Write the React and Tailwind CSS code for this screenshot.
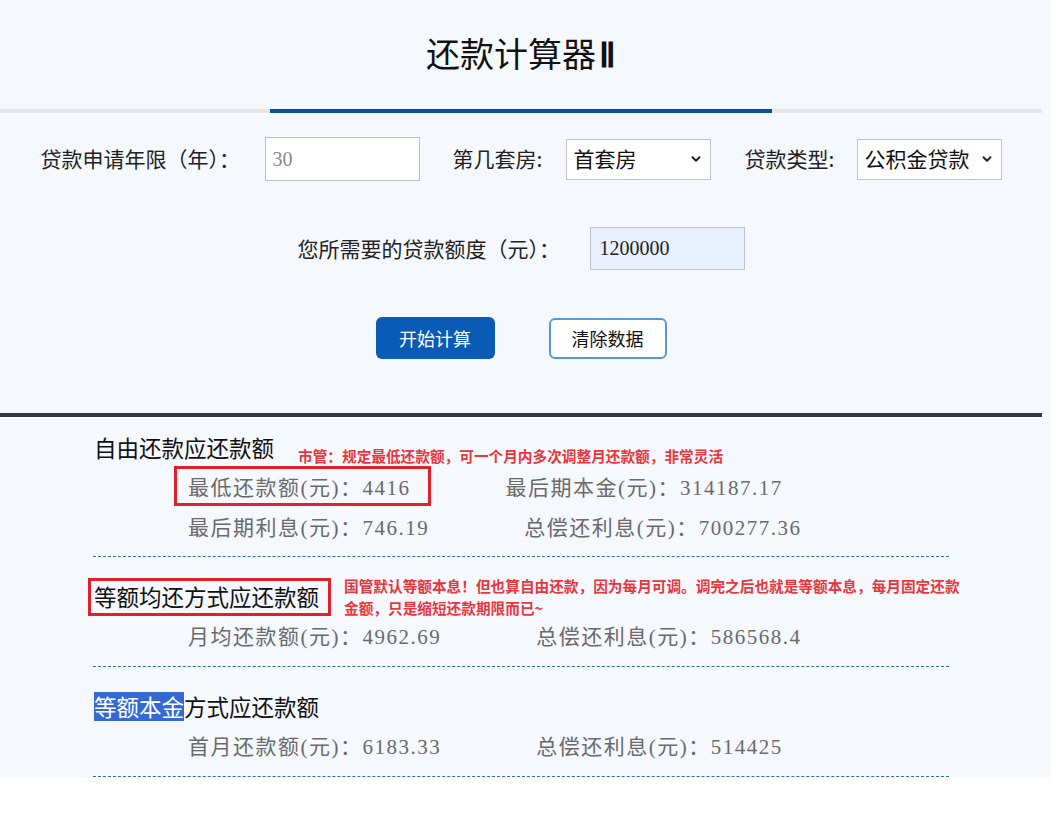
import React from 'react'

function Chevron() {
  return (
    <svg className="pointer-events-none absolute right-[8px] top-1/2 h-[14px] w-[14px] -translate-y-1/2" viewBox="0 0 16 16" fill="none" stroke="#222" strokeWidth="2.2" strokeLinecap="round" strokeLinejoin="round">
      <polyline points="4,6 8,10 12,6" />
    </svg>
  )
}

function Select({ value, options }) {
  return (
    <div className="relative h-[41px] w-[145px]">
      <select defaultValue={value} className="h-full w-full appearance-none border border-[#c4c4c4] bg-white pl-[7px] text-[21px] text-[#111] outline-none">
        {options.map(o => <option key={o}>{o}</option>)}
      </select>
      <Chevron />
    </div>
  )
}

function Item({ label, value, boxed }) {
  return (
    <span className="relative whitespace-nowrap">
      {label}：{value}
      {boxed && <span className="absolute -left-[14px] -right-[20px] top-[-2px] bottom-[2px] border-[3px] border-[#e0202b]" />}
    </span>
  )
}

function Row({ children }) {
  return (
    <div className="flex h-[40px] items-center gap-[95px] pl-[95px] font-['Liberation_Serif','Noto_Sans_CJK_SC',serif] text-[21px] leading-[40px] tracking-[1.5px] text-[#6a6a6a]">
      {children}
    </div>
  )
}

export default function App() {
  return (
    <div className="w-full font-['Noto_Sans_CJK_SC',sans-serif]">
      <div className="bg-[#f5f8fd] pr-[9px]">
        {/* header */}
        <div className="flex h-[109px] items-center justify-center">
          <h1 className="text-[34px] leading-none text-[#111]">还款计算器<span className="ml-[3px] font-['Liberation_Serif',serif] font-bold">Ⅱ</span></h1>
        </div>
        <div className="flex h-[4px] justify-center bg-[#e6e6e6]">
          <div className="w-[502px] bg-[#0b4e96]" />
        </div>

        {/* form */}
        <div className="flex flex-col items-center pt-[24px] pb-[54px] text-[21px] text-[#222]">
          <div className="flex h-[44px] items-center">
            <label className="w-[224px] whitespace-nowrap">贷款申请年限（年）：</label>
            <input defaultValue="30" className="h-[44px] w-[155px] border border-[#c0c0c0] bg-white px-[7px] font-['Liberation_Serif',serif] text-[20px] text-[#888] outline-none" />
            <label className="ml-[33px] w-[113px] whitespace-nowrap">第几套房:</label>
            <Select value="首套房" options={['首套房', '二套房']} />
            <label className="ml-[34px] w-[112px] whitespace-nowrap">贷款类型:</label>
            <Select value="公积金贷款" options={['公积金贷款', '商业贷款', '组合贷款']} />
          </div>

          <div className="mt-[46px] flex h-[43px] items-center">
            <label className="w-[292px] whitespace-nowrap">您所需要的贷款额度（元）：</label>
            <input defaultValue="1200000" className="h-[43px] w-[155px] border border-[#bcc5d3] bg-[#e8f0fe] px-[9px] font-['Liberation_Serif',serif] text-[20px] text-[#222] outline-none" />
          </div>

          <div className="mt-[47px] flex items-center gap-[54px]">
            <button className="h-[42px] w-[119px] rounded-[6px] bg-[#0a5bb5] text-[18px] text-white">开始计算</button>
            <button className="h-[41px] w-[118px] rounded-[6px] border-2 border-[#5b97d6] bg-white text-[18px] text-[#111]">清除数据</button>
          </div>
        </div>

        <div className="h-[4px] bg-[#333a35]" />

        {/* results */}
        <div className="mx-auto w-[856px] text-[#111]">
          <section className="border-b border-dashed border-[#2e6f9e] pt-[11px] pb-[8px]">
            <div className="flex h-[40px] items-center">
              <h3 className="shrink-0 whitespace-nowrap pl-px text-[22.5px]">自由还款应还款额</h3>
              <p className="ml-[24px] mt-[16px] whitespace-nowrap text-[14.67px] font-bold text-[#e8363c]">市管：规定最低还款额，可一个月内多次调整月还款额，非常灵活</p>
            </div>
            <Row>
              <Item label="最低还款额(元)" value="4416" boxed />
              <Item label="最后期本金(元)" value="314187.17" />
            </Row>
            <Row>
              <Item label="最后期利息(元)" value="746.19" />
              <Item label="总偿还利息(元)" value="700277.36" />
            </Row>
          </section>

          <section className="border-b border-dashed border-[#2e6f9e] pt-[20px] pb-[9px]">
            <div className="flex h-[40px] items-center">
              <h3 className="relative shrink-0 whitespace-nowrap pl-px text-[22.5px]">
                等额均还方式应还款额
                <span className="absolute -left-[5px] -right-[12px] -top-[2px] -bottom-[2px] border-[3px] border-[#e0202b]" />
              </h3>
              <p className="ml-[25px] whitespace-nowrap text-[14.67px] font-bold leading-[22px] text-[#e8363c]">
                国管默认等额本息！但也算自由还款，因为每月可调。调完之后也就是等额本息，每月固定还款<br />金额，只是缩短还款期限而已~
              </p>
            </div>
            <Row>
              <Item label="月均还款额(元)" value="4962.69" />
              <Item label="总偿还利息(元)" value="586568.4" />
            </Row>
          </section>

          <section className="border-b border-dashed border-[#2e6f9e] pt-[20px] pb-[9px]">
            <div className="flex h-[40px] items-center">
              <h3 className="shrink-0 whitespace-nowrap pl-px text-[22.5px]">
                <span className="inline-block h-[29px] bg-[#3469d3] leading-[29px] text-white">等额本金</span>方式应还款额
              </h3>
            </div>
            <Row>
              <Item label="首月还款额(元)" value="6183.33" />
              <Item label="总偿还利息(元)" value="514425" />
            </Row>
          </section>
        </div>
      </div>
    </div>
  )
}
